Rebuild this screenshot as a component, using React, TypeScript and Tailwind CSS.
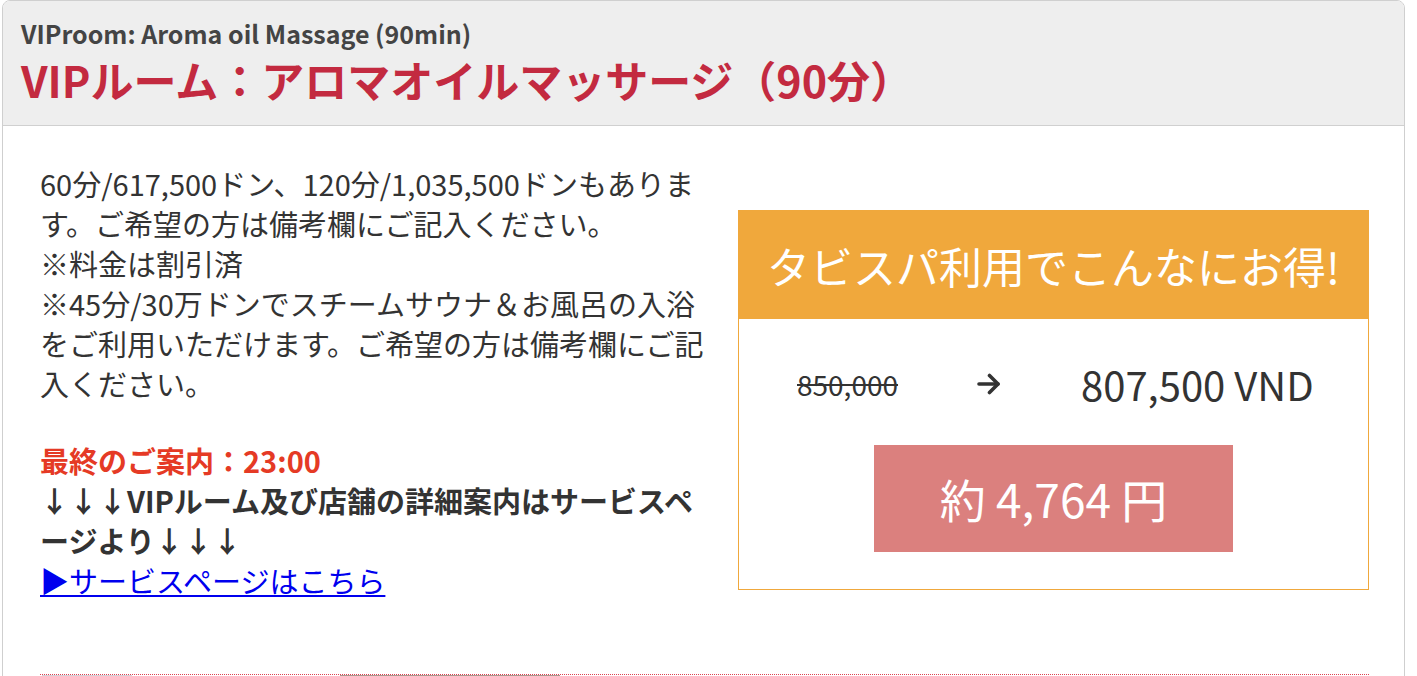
import React from "react";

const font = { fontFamily: '"Noto Sans CJK JP", "Noto Sans", sans-serif' };

const Arrow = () => (
  <svg width="24" height="22" viewBox="0 0 24 22" fill="none" stroke="#333" strokeWidth="3.6" strokeLinecap="round" strokeLinejoin="round">
    <path d="M2 11h19" />
    <path d="M12.5 2.5 21 11l-8.5 8.5" />
  </svg>
);

const PriceBox = () => (
  <div className="w-[631px] border border-[#f0a83c] bg-white">
    <div className="h-[108px] bg-[#f0a83c] flex items-center justify-center text-white text-[43px] leading-none">
      タビスパ利用でこんなにお得!
    </div>
    <div className="flex flex-col items-center pt-[42px] pb-[37px]">
      <div className="flex items-center w-full h-[46px]">
        <span className="ml-[58px] w-[104px] text-[28px] text-[#333] line-through">850,000</span>
        <span className="ml-[76px]">
          <Arrow />
        </span>
        <span className="ml-[80px] text-[40px] text-[#333]">807,500 VND</span>
      </div>
      <div className="mt-[38px] w-[359px] h-[107px] bg-[#db807e] flex items-center justify-center text-white text-[46px]">
        約 4,764 円
      </div>
    </div>
  </div>
);

export default function App() {
  return (
    <div className="bg-white h-[676px] overflow-hidden pl-[2px] pr-[12px]" style={font}>
      <div className="border border-[#cfcfcf] rounded-t-[8px] overflow-hidden">
        <div className="bg-[#eeeeee] border-b border-[#d0d0d0] h-[125px] px-[18px] pt-[15px]">
          <div className="text-[25px] font-semibold text-[#444] leading-[34px]">
            VIProom: Aroma oil Massage (90min)
          </div>
          <div className="text-[43px] font-bold text-[#c32a40] leading-[58px]">
            VIPルーム：アロマオイルマッサージ（90分）
          </div>
        </div>
        <div className="pl-[37px] pr-[35px] pt-[37px]">
          <div className="flex gap-[26px]">
            <div className="w-[672px] shrink-0 text-[29px] leading-[40px] text-[#333]">
              <p>
                60分/617,500ドン、120分/1,035,500ドンもあります。ご希望の方は備考欄にご記入ください。
              </p>
              <p>※料金は割引済</p>
              <p>
                ※45分/30万ドンでスチームサウナ＆お風呂の入浴をご利用いただけます。ご希望の方は備考欄にご記入ください。
              </p>
              <p className="h-[37px]"></p>
              <p className="font-bold text-[#e53a25]">最終のご案内：23:00</p>
              <p className="font-bold">↓↓↓VIPルーム及び店舗の詳細案内はサービスページより↓↓↓</p>
              <a href="#" className="text-[#0000ee] underline">
                ▶サービスページはこちら
              </a>
            </div>
            <div className="pt-[47px] shrink-0">
              <PriceBox />
            </div>
          </div>
          <div className="mt-[74px] border-t border-dotted border-[#e04050] h-[20px] flex gap-[4px] px-[2px]">
            <div className="w-[90px] bg-[#cfd3d8]"></div>
            <div className="w-[200px] bg-white"></div>
            <div className="w-[220px] bg-[#a49a8e]"></div>
          </div>
        </div>
      </div>
    </div>
  );
}
